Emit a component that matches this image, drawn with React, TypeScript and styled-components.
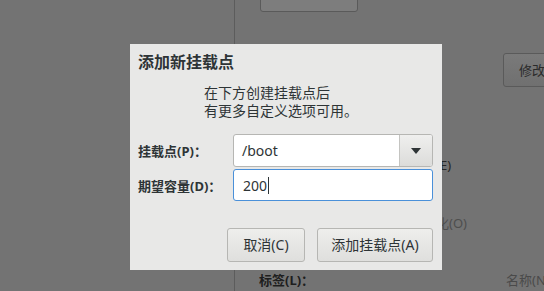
import styled, { createGlobalStyle } from "styled-components";

const GlobalStyle = createGlobalStyle`
  html, body {
    margin: 0;
    padding: 0;
    background: #737373;
  }
  * {
    box-sizing: border-box;
  }
`;

const Screen = styled.div`
  position: relative;
  width: 544px;
  height: 291px;
  overflow: hidden;
  display: flex;
  background: #737373;
  font-family: "Noto Sans", "Noto Sans CJK SC", sans-serif;
`;

const SidePane = styled.div`
  width: 235px;
  flex-shrink: 0;
  border-right: 1px solid #5c5c5c;
`;

const DetailPane = styled.div`
  flex: 1;
  display: flex;
  flex-direction: column;
`;

const TopButton = styled.div`
  margin: -20px 0 0 25px;
  width: 98px;
  height: 32px;
  border: 1px solid #5a5a5a;
  border-radius: 3px;
  background: #7d7d7d;
`;

const ModifyRow = styled.div`
  display: flex;
  margin-top: 41px;
  padding-left: 268px;
`;

const ModifyButton = styled.div`
  width: 70px;
  height: 34px;
  flex-shrink: 0;
  border: 1px solid #5a5a5a;
  border-radius: 3px;
  background: linear-gradient(#7a7a7a, #707070);
  color: #2a2a2a;
  font-size: 13px;
  line-height: 32px;
  padding-left: 15px;
`;

const BgLabel = styled.div<{ $left: number; $top: number; $dim?: boolean }>`
  margin-top: ${(p) => p.$top}px;
  padding-left: ${(p) => p.$left}px;
  font-size: 13px;
  line-height: 16px;
  white-space: nowrap;
  color: ${(p) => (p.$dim ? "#4e4e4e" : "#262626")};
`;

const BottomRow = styled.div`
  display: flex;
  margin-top: 41px;
  padding-left: 24px;
  gap: 192px;
  white-space: nowrap;
  font-size: 13px;
  line-height: 16px;
`;

const BottomLabel = styled.span<{ $dim?: boolean }>`
  font-weight: ${(p) => (p.$dim ? 400 : 700)};
  color: ${(p) => (p.$dim ? "#4a4a4a" : "#1e1e1e")};
`;

const Dialog = styled.div`
  position: absolute;
  left: 130px;
  top: 44px;
  width: 312px;
  height: 226px;
  background: #e8e8e7;
  padding: 8px 9px 8px 8px;
  display: flex;
  flex-direction: column;
  color: #2e3436;
`;

const Title = styled.div`
  font-size: 16px;
  line-height: 20px;
  font-weight: 700;
`;

const Description = styled.div`
  margin-top: 12px;
  padding-left: 66px;
  font-size: 14px;
  line-height: 18px;
`;

const Form = styled.div`
  margin-top: 14px;
  display: grid;
  grid-template-columns: 95px 200px;
  row-gap: 2px;
  align-items: center;
`;

const FieldLabel = styled.div`
  font-size: 13px;
  font-weight: 700;
  white-space: nowrap;
`;

const Combo = styled.div`
  display: flex;
  height: 33px;
  border: 1px solid #b6b6b3;
  border-radius: 3px;
  background: #fff;
  overflow: hidden;
`;

const ComboValue = styled.div`
  flex: 1;
  padding-left: 8px;
  font-size: 14px;
  line-height: 31px;
  color: #2e3436;
`;

const ComboArrow = styled.div`
  width: 33px;
  border-left: 1px solid #c4c4c1;
  background: linear-gradient(#efefee, #dcdcda);
  display: flex;
  align-items: center;
  justify-content: center;
`;

const Entry = styled.div`
  height: 32px;
  border: 1px solid #4a90d9;
  border-radius: 3px;
  background: #fff;
  padding-left: 9px;
  display: flex;
  align-items: center;
  font-size: 14px;
`;

const Caret = styled.span`
  display: inline-block;
  width: 1px;
  height: 17px;
  margin-left: 1px;
  background: #2e3436;
`;

const Actions = styled.div`
  margin-top: auto;
  display: flex;
  justify-content: flex-end;
  gap: 12px;
`;

const Button = styled.div<{ $width: number }>`
  width: ${(p) => p.$width}px;
  height: 34px;
  border: 1px solid #b6b6b3;
  border-radius: 3px;
  background: linear-gradient(#eeeeec, #dfdfdd);
  font-size: 14px;
  line-height: 32px;
  text-align: center;
  color: #2e3436;
`;

export default function App() {
  return (
    <>
      <GlobalStyle />
      <Screen>
        <SidePane />
        <DetailPane>
          <TopButton />
          <ModifyRow>
            <ModifyButton>修改</ModifyButton>
          </ModifyRow>
          <BgLabel $left={175} $top={70}>
            加密(E)
          </BgLabel>
          <BgLabel $left={175} $top={42} $dim>
            格式化(O)
          </BgLabel>
          <BottomRow>
            <BottomLabel>标签(L)：</BottomLabel>
            <BottomLabel $dim>名称(N)：</BottomLabel>
          </BottomRow>
        </DetailPane>

        <Dialog>
          <Title>添加新挂载点</Title>
          <Description>
            在下方创建挂载点后
            <br />
            有更多自定义选项可用。
          </Description>
          <Form>
            <FieldLabel>挂载点(P)：</FieldLabel>
            <Combo>
              <ComboValue>/boot</ComboValue>
              <ComboArrow>
                <svg width="10" height="6" viewBox="0 0 10 6">
                  <path d="M0 0h10L5 6z" fill="#2e3436" />
                </svg>
              </ComboArrow>
            </Combo>
            <FieldLabel>期望容量(D)：</FieldLabel>
            <Entry>
              200
              <Caret />
            </Entry>
          </Form>
          <Actions>
            <Button $width={78}>取消(C)</Button>
            <Button $width={116}>添加挂载点(A)</Button>
          </Actions>
        </Dialog>
      </Screen>
    </>
  );
}
